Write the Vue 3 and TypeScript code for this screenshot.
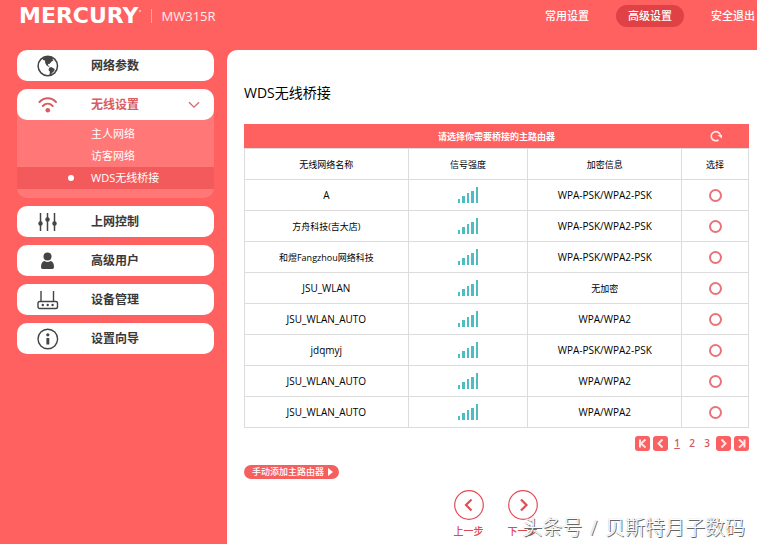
<script setup lang="ts">
import { ref } from 'vue'

interface Network {
  name: string
  security: string
}

const networks: Network[] = [
  { name: 'A', security: 'WPA-PSK/WPA2-PSK' },
  { name: '方舟科技(吉大店)', security: 'WPA-PSK/WPA2-PSK' },
  { name: '和煜Fangzhou网络科技', security: 'WPA-PSK/WPA2-PSK' },
  { name: 'JSU_WLAN', security: '无加密' },
  { name: 'JSU_WLAN_AUTO', security: 'WPA/WPA2' },
  { name: 'jdqmyj', security: 'WPA-PSK/WPA2-PSK' },
  { name: 'JSU_WLAN_AUTO', security: 'WPA/WPA2' },
  { name: 'JSU_WLAN_AUTO', security: 'WPA/WPA2' },
]

// Chinese values are set one size smaller than Latin ones
const isChinese = (text: string): boolean => /[\u4e00-\u9fff]/.test(text)

const subItems = ['主人网络', '访客网络', 'WDS无线桥接']
const activeSub = ref(2)
const menuOpen = ref(true)
const selected = ref<number | null>(null)
const page = ref(1)
</script>

<template>
  <div class="page">
    <header class="header">
      <span class="logo">MERCURY</span>
      <span class="dot"></span>
      <span class="model">MW315R</span>
      <nav class="top-nav">
        <a href="#basic">常用设置</a>
        <a href="#advanced" class="current">高级设置</a>
        <a href="#logout">安全退出</a>
      </nav>
    </header>

    <div class="body">
      <nav class="sidebar">
        <button type="button" class="item">
          <svg class="icon" viewBox="0 0 22 22">
            <circle cx="10.8" cy="11" r="9.7" fill="none" stroke="#444" stroke-width="1.5" />
            <path fill="#444" d="M6 3.2 9 1.5l5-.1 2.4 1.2-1 1.5 1 1.4-2.1 1.2-1.5 2.1-1.8.2.2 1.5 1.6 1.1-1.3.2-2-1.5-1.3-2.3-.2-2.6-2.2-.4z" />
            <path fill="#444" d="M12.2 12.7l2-.6 3.5 1.8-.5 2.2-2.2 1.8-1.4 2.5-1.1-.3.4-3.4-1.4-1.8z" />
          </svg>
          <span>网络参数</span>
        </button>

        <div class="group">
          <button type="button" class="item active" :aria-expanded="menuOpen" @click="menuOpen = !menuOpen">
            <svg class="icon" viewBox="0 0 22 22" fill="none" stroke="#d85b62" stroke-width="2" stroke-linecap="round">
              <path d="M2.5 8c4.7-4.9 11.8-4.9 16.5 0M5.8 12c2.9-2.9 7-2.9 9.9 0" />
              <circle cx="10.8" cy="16.2" r="2.3" fill="#d85b62" stroke="none" />
            </svg>
            <span>无线设置</span>
            <svg class="chevron" viewBox="0 0 12 8"><path d="M1 1.2 6 6.2l5-5" fill="none" stroke="#d9676c" stroke-width="1.3" /></svg>
          </button>
          <div v-if="menuOpen" class="submenu">
            <a
              v-for="(s, i) in subItems"
              :key="s"
              :href="'#wireless-' + i"
              :class="{ on: i === activeSub }"
              @click="activeSub = i"
            >{{ s }}</a>
          </div>
        </div>

        <button type="button" class="item">
          <svg class="icon" viewBox="0 0 22 22" stroke="#444" stroke-width="1.5" fill="#444">
            <path d="M3.5 2v18M10.500 2v18M17.500 2v18" fill="none" />
            <circle cx="3.5" cy="12.5" r="1.5" /><circle cx="10.5" cy="8.5" r="1.5" /><circle cx="17.5" cy="12.5" r="1.5" />
          </svg>
          <span>上网控制</span>
        </button>
        <button type="button" class="item">
          <svg class="icon" viewBox="0 0 22 22" fill="#444">
            <circle cx="10.5" cy="6.5" r="4" />
            <path d="M4 17C4 13.200 5.500 11.200 7.500 11C9.200 12.200 11.800 12.200 13.500 11C15.500 11.200 17 13.200 17 17C17 18.200 16.400 19 15.200 19H5.800C4.600 19 4 18.200 4 17z" />
          </svg>
          <span>高级用户</span>
        </button>
        <button type="button" class="item">
          <svg class="icon" viewBox="0 0 22 22" fill="none" stroke="#444" stroke-width="1.4">
            <rect x="1" y="12.5" width="19.5" height="7" rx="1.8" />
            <path d="M4 12.5V2M16.5 12.500V2" />
            <g fill="#444" stroke="none"><circle cx="5.8" cy="16" r="1.2" /><circle cx="10.7" cy="16" r="1.2" /><circle cx="15.6" cy="16" r="1.2" /></g>
          </svg>
          <span>设备管理</span>
        </button>
        <button type="button" class="item">
          <svg class="icon" viewBox="0 0 22 22">
            <circle cx="10.8" cy="11" r="9.8" fill="none" stroke="#444" stroke-width="1.4" />
            <circle cx="10.8" cy="6.8" r="1.6" fill="#444" />
            <rect x="9.4" y="10" width="2.9" height="6.5" rx=".6" fill="#444" />
          </svg>
          <span>设置向导</span>
        </button>
      </nav>

      <main class="panel">
        <h1>WDS无线桥接</h1>

        <div class="bar">
          <span>请选择你需要桥接的主路由器</span>
          <button type="button" class="refresh" aria-label="刷新">
            <svg viewBox="0 0 12 12"><path d="M8.5 10A4.600 4.600 0 1 1 10.500 6" fill="none" stroke="#ffe9e6" stroke-width="1.6" /><path d="M7.200 5h4.800v3.600z" fill="#ffe9e6" /></svg>
          </button>
        </div>
        <table>
          <colgroup>
            <col class="c-name" /><col class="c-signal" /><col class="c-sec" /><col class="c-pick" />
          </colgroup>
          <thead>
            <tr><th>无线网络名称</th><th>信号强度</th><th>加密信息</th><th>选择</th></tr>
          </thead>
          <tbody>
            <tr v-for="(n, i) in networks" :key="i">
              <td :class="{ zh: isChinese(n.name) }">{{ n.name }}</td>
              <td>
                <svg class="signal" viewBox="0 0 21 16" fill="#4dbcc3">
                  <rect x="0" y="12" width="2" height="4" />
                  <rect x="4" y="9" width="3" height="7" />
                  <rect x="9" y="6" width="2" height="10" />
                  <rect x="13" y="4" width="3" height="12" />
                  <rect x="18" y="0" width="2" height="16" />
                </svg>
              </td>
              <td :class="{ zh: isChinese(n.security) }">{{ n.security }}</td>
              <td><input v-model="selected" type="radio" name="network" :value="i" :aria-label="n.name" /></td>
            </tr>
          </tbody>
        </table>

        <div class="pager">
          <button type="button" class="sq" aria-label="首页" @click="page = 1">
            <svg viewBox="0 0 15 15"><path d="M5 3.500v8M10.500 3.500l-4.500 4 4.500 4" /></svg>
          </button>
          <button type="button" class="sq" aria-label="上一页" @click="page = Math.max(1, page - 1)">
            <svg viewBox="0 0 15 15"><path d="M9.500 3.500l-4 4 4 4" /></svg>
          </button>
          <button
            v-for="p in 3"
            :key="p"
            type="button"
            class="num"
            :class="{ on: p === page }"
            @click="page = p"
          >{{ p }}</button>
          <button type="button" class="sq" aria-label="下一页" @click="page = Math.min(3, page + 1)">
            <svg viewBox="0 0 15 15"><path d="M5.500 3.500l4 4-4 4" /></svg>
          </button>
          <button type="button" class="sq" aria-label="末页" @click="page = 3">
            <svg viewBox="0 0 15 15"><path d="M10.500 3.500v8M5 3.500l4.500 4-4.500 4" /></svg>
          </button>
        </div>

        <button type="button" class="manual">
          <span>手动添加主路由器</span>
          <svg viewBox="0 0 5 8"><path d="M0 0l5 4-5 4z" fill="#fff" /></svg>
        </button>

        <div class="steps">
          <button type="button">
            <svg viewBox="0 0 30 30"><circle cx="15" cy="15" r="14.3" stroke-width="1.2" /><path d="M17.500 9.500 12 15l5.500 5.500" stroke-width="2.2" /></svg>
            <span>上一步</span>
          </button>
          <button type="button">
            <svg viewBox="0 0 30 30"><circle cx="15" cy="15" r="14.3" stroke-width="1.2" /><path d="M13 9.500l5.500 5.500-5.500 5.500" stroke-width="2.2" /></svg>
            <span>下一步</span>
          </button>
        </div>
      </main>
    </div>

    <div class="watermark"><span>头条号</span><span>/</span><span>贝斯特月子数码</span></div>
  </div>
</template>

<style>
body {
  background: #ff6161;
}
</style>

<style scoped>
.page {
  position: relative;
  display: flex;
  flex-direction: column;
  min-height: 100vh;
  background: #ff6161;
  color: #000;
  font-family: "Open Sans", "Noto Sans CJK SC", sans-serif;
  font-size: 9px;
}
.page * {
  box-sizing: border-box;
}
button {
  margin: 0;
  padding: 0;
  border: 0;
  background: none;
  color: inherit;
  font: inherit;
  cursor: pointer;
}
a {
  color: inherit;
  text-decoration: none;
}
svg {
  display: block;
}
.header {
  display: flex;
  align-items: center;
  height: 50px;
  padding: 0 2px 18px 19px;
  color: #fff;
}
.logo {
  font: bold 22px/22px "DejaVu Sans", sans-serif;
}
.dot {
  width: 2px;
  height: 2px;
  margin-bottom: 10px;
  border-radius: 50%;
  background: #ffc4c4;
}
.model {
  margin-left: 10px;
  padding-left: 10px;
  border-left: 1px solid #ffa0a0;
  font-size: 13px;
  line-height: 14px;
  color: #ffeeee;
}
.top-nav {
  display: flex;
  gap: 15px;
  margin-left: auto;
  font-size: 11px;
  font-weight: 500;
  line-height: 22px;
}
.top-nav a {
  padding: 0 12px;
  border-radius: 11px;
}
.top-nav a:last-child {
  padding-right: 0;
}
.top-nav .current {
  background: #e04145;
}
.body {
  display: flex;
  flex: 1;
  gap: 13px;
  padding-left: 17px;
}
.sidebar {
  display: flex;
  flex: none;
  flex-direction: column;
  gap: 8px;
  width: 197px;
}
.item {
  display: flex;
  align-items: center;
  width: 100%;
  height: 31px;
  padding: 0 14px 0 20px;
  border-radius: 10px;
  background: #fff;
  color: #383838;
  font-size: 12px;
  font-weight: bold;
}
.item span {
  padding-bottom: 2px;
}
.item.active {
  position: relative;
  color: #d85b62;
}
.icon {
  width: 22px;
  height: 22px;
  margin-right: 32px;
}
.chevron {
  width: 12px;
  height: 8px;
  margin-left: auto;
}
.submenu {
  margin-top: -10px;
  padding: 13px 0 9px;
  border-radius: 0 0 10px 10px;
  background: #ff7777;
  color: #fff;
  font-size: 11px;
  line-height: 22px;
}
.submenu a {
  display: flex;
  align-items: center;
  padding-left: 51px;
}
.submenu a::before {
  width: 6px;
  height: 6px;
  margin-right: 17px;
  border-radius: 50%;
  content: "";
}
.submenu a.on {
  background: #f35a5c;
}
.submenu a.on::before {
  background: #fff;
}
.panel {
  flex: 1;
  min-width: 0;
  padding: 32px 8px 0 17px;
  border-radius: 10px 0 0;
  background: #fff;
}
h1 {
  margin: 0 0 20px;
  font-size: 14px;
  font-weight: normal;
  line-height: 22px;
}
.bar {
  display: grid;
  grid-template-columns: 1fr 67px;
  align-items: center;
  height: 24px;
  background: #ff6161;
  color: #fff;
  font-weight: bold;
}
.bar span {
  padding-left: 67px;
  text-align: center;
}
.refresh svg {
  width: 12px;
  height: 12px;
  margin: 0 auto;
}
table {
  width: 100%;
  border-collapse: collapse;
  table-layout: fixed;
}
.c-name {
  width: calc(100% * 164 / 505);
}
.c-signal {
  width: calc(100% * 120 / 505);
}
.c-sec {
  width: calc(100% * 154 / 505);
}
.c-pick {
  width: calc(100% * 67 / 505);
}
th,
td {
  height: 31px;
  padding: 0;
  border: 1px solid #dcdcdc;
  font-weight: normal;
  text-align: center;
  vertical-align: middle;
}
td {
  font-size: 10px;
}
th,
td.zh {
  font-size: 9px;
}
.signal {
  width: 21px;
  height: 16px;
  margin: 0 auto;
}
input[type="radio"] {
  display: block;
  width: 13px;
  height: 13px;
  margin: 0 auto;
  border: 2px solid #e97478;
  border-radius: 50%;
  appearance: none;
}
input[type="radio"]:checked {
  background: radial-gradient(#e97478 40%, transparent 45%);
}
.pager {
  display: flex;
  align-items: center;
  justify-content: flex-end;
  gap: 3px;
  margin-top: 8px;
  color: #d5585c;
  font-size: 10px;
}
.sq {
  width: 15px;
  height: 15px;
  border-radius: 3px;
  background: #f96163;
}
.sq path {
  fill: none;
  stroke: #ffe5e5;
  stroke-width: 2;
}
.num {
  width: 12px;
  font-weight: 600;
  line-height: 15px;
}
.num.on {
  text-decoration: underline;
}
.manual {
  display: flex;
  align-items: center;
  gap: 4px;
  height: 14px;
  margin-top: 14px;
  padding: 0 6px 0 8px;
  border-radius: 7px;
  background: #f5605f;
  color: #fff;
  font-weight: 500;
  line-height: 14px;
}
.manual svg {
  width: 5px;
  height: 8px;
}
.steps {
  display: flex;
  justify-content: center;
  gap: 24px;
  margin-top: 11px;
  padding-right: 2px;
  color: #e2474f;
  font-size: 10px;
  font-weight: 500;
}
.steps button {
  display: flex;
  flex-direction: column;
  align-items: center;
  gap: 4px;
  line-height: 14px;
}
.steps svg {
  width: 30px;
  height: 30px;
  fill: none;
  stroke: #e54b55;
}
.watermark {
  position: absolute;
  right: 12px;
  bottom: 2px;
  display: flex;
  gap: 8px;
  color: #fff;
  font-size: 20px;
  font-weight: 300;
  line-height: 28px;
  text-shadow: 1px 1px 0 #666, 0 0 1px #999;
  pointer-events: none;
}
</style>
